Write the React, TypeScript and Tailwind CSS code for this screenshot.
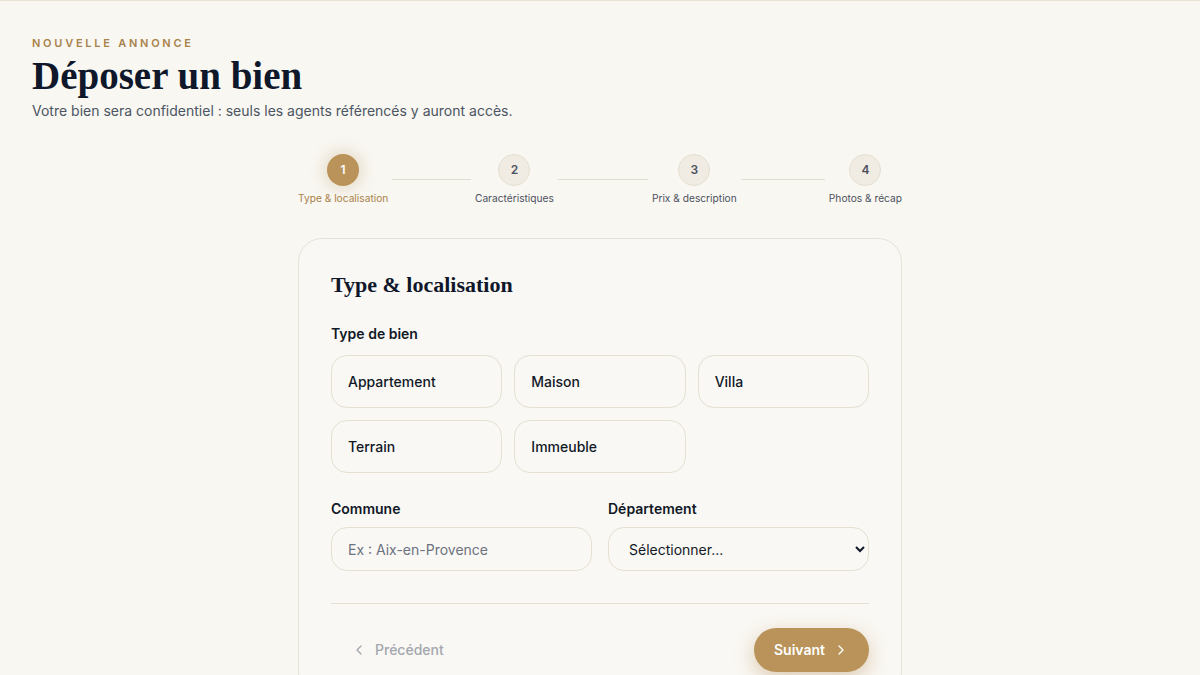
import { ChevronLeft, ChevronRight } from "lucide-react";

const steps = [
    { n: 1, label: "Type & localisation" },
    { n: 2, label: "Caractéristiques" },
    { n: 3, label: "Prix & description" },
    { n: 4, label: "Photos & récap" },
];

const types = ["Appartement", "Maison", "Villa", "Terrain", "Immeuble"];

const serif = "font-['Liberation_Serif',serif]";

function Stepper() {
    return (
        <div className="flex items-center w-[604px] mx-auto">
            {steps.map((step, index) => (
                <div key={step.n} className={index === steps.length - 1 ? "flex items-center" : "flex items-center flex-1"}>
                    <div className="flex flex-col items-center gap-[5px]">
                        {step.n === 1 ? (
                            <div className="w-8 h-8 rounded-full bg-[#b9935a] text-white text-xs font-semibold flex items-center justify-center shadow-[0_0_14px_4px_rgba(185,147,90,0.25)]">{step.n}</div>
                        ) : (
                            <div className="w-8 h-8 rounded-full bg-[#f1ece3] border border-[#e6dfd2] text-[#4b5160] text-xs font-semibold flex items-center justify-center">{step.n}</div>
                        )}
                        <span className={step.n === 1 ? "text-[10.2px] leading-[14px] text-[#a8824a] whitespace-nowrap" : "text-[10.2px] leading-[14px] text-[#4b5160] whitespace-nowrap"}>{step.label}</span>
                    </div>
                    {index < steps.length - 1 && <div className="flex-1 h-px bg-[#e2dcd0] mx-1"></div>}
                </div>
            ))}
        </div>
    );
}

export default function App() {
    return (
        <div className="min-h-screen bg-[#f9f7f2] border-t border-[#e9e3cf] font-['Inter',sans-serif] text-[#111827]">
            <div className="px-8 pt-[34px]">
                <p className="text-[11px] leading-4 font-semibold tracking-[0.25em] text-[#a8824a]">NOUVELLE ANNONCE</p>
                <h1 className={`${serif} text-[39px] leading-[46px] font-bold text-[#0f172a] mt-[2px]`}>Déposer un bien</h1>
                <p className="text-sm text-[#4b5563] mt-[2px]">Votre bien sera confidentiel : seuls les agents référencés y auront accès.</p>
            </div>

            <div className="mt-[33px]">
                <Stepper />
            </div>

            <div className="w-[604px] mx-auto mt-[33px] rounded-3xl border border-[#e8e2d6] bg-[#faf8f4] px-8 pt-[32px] pb-6">
                <h2 className={`${serif} text-[22px] leading-7 font-bold text-[#0f172a]`}>Type & localisation</h2>

                <p className="text-sm font-semibold mt-[25px] leading-5">Type de bien</p>
                <div className="grid grid-cols-3 gap-3 mt-[11px]">
                    {types.map((type) => (
                        <button key={type} className="h-[53px] rounded-2xl border border-[#e6dfd2] bg-[#faf8f4] px-4 text-left text-sm font-medium text-[#111827]">{type}</button>
                    ))}
                </div>

                <div className="grid grid-cols-2 gap-4 mt-[26px]">
                    <div>
                        <p className="text-sm font-semibold leading-5">Commune</p>
                        <input placeholder="Ex : Aix-en-Provence" className="mt-[8px] w-full h-11 rounded-2xl border border-[#e6dfd2] bg-[#faf8f4] px-4 text-sm placeholder:text-[#6b7280] outline-none" />
                    </div>
                    <div>
                        <p className="text-sm font-semibold leading-5">Département</p>
                        <select className="mt-[8px] w-full h-11 rounded-2xl border border-[#e6dfd2] bg-[#faf8f4] pl-4 pr-2 text-sm text-[#111827] outline-none">
                            <option>Sélectionner...</option>
                        </select>
                    </div>
                </div>

                <div className="h-px bg-[#e6dfd2] mt-8"></div>

                <div className="flex items-center justify-between pt-6">
                    <button className="flex items-center gap-2 px-5 text-sm font-medium text-[#a3a7ae]">
                        <ChevronLeft size={16} strokeWidth={2} />
                        Précédent
                    </button>
                    <button className="flex items-center gap-2 h-11 px-5 rounded-full bg-[#b9935a] text-white text-sm font-semibold shadow-[0_6px_20px_rgba(185,147,90,0.45)]">
                        Suivant
                        <ChevronRight size={16} strokeWidth={2} />
                    </button>
                </div>
            </div>
        </div>
    );
}
